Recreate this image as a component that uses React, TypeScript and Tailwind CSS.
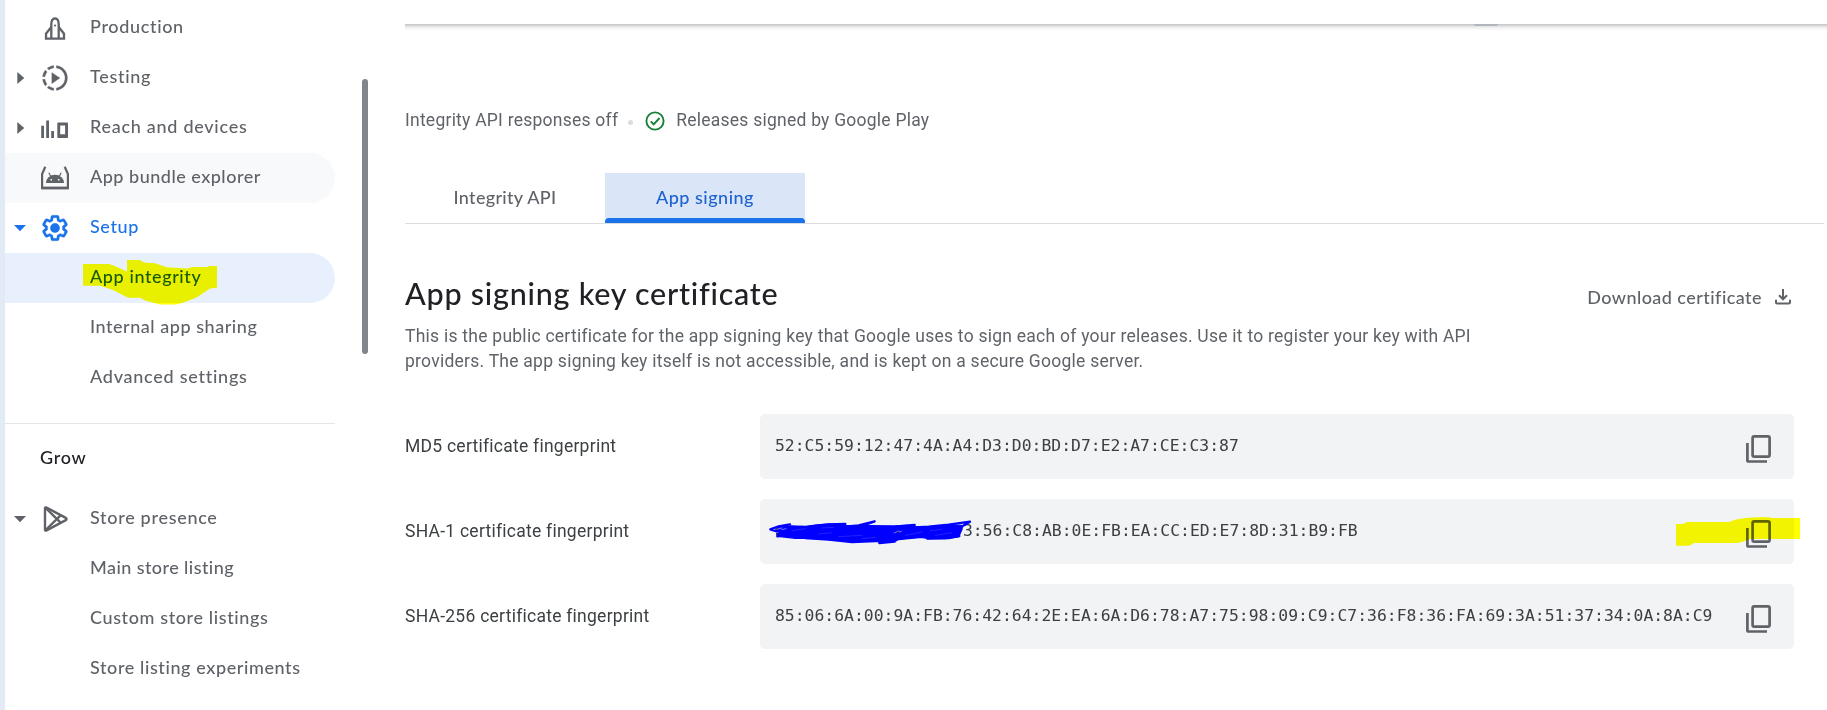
import React from "react";

const RocketIcon = () => (
  <svg width="30" height="30" viewBox="0 0 30 30" fill="none" stroke="#5f6368" strokeWidth="2.3">
    <path d="M11.300 25.500V11c0-3.400 1.500-5.500 3.700-5.700 2.200.200 3.700 2.300 3.700 5.700v14.500" />
    <path d="M11.300 14 6 20.700V25.600H24V20.700L18.700 14" />
    <circle cx="15" cy="12.500" r="1.100" fill="#5f6368" stroke="none" />
  </svg>
);

const TestingIcon = () => (
  <svg width="30" height="30" viewBox="0 0 24 24" fill="#5f6368" stroke="#5f6368" strokeWidth="0.15">
    <path d="M9.400 7.500v9L16 12zM11 4.070V2.050c-2.010.200-3.840 1-5.320 2.210L7.100 5.690c1.110-.860 2.440-1.440 3.900-1.620zM5.690 7.100 4.260 5.680C3.050 7.160 2.250 8.990 2.050 11h2.020c.180-1.460.760-2.790 1.620-3.900zM4.070 13H2.050c.200 2.010 1 3.840 2.210 5.320l1.430-1.430c-.860-1.100-1.440-2.430-1.620-3.890zm1.610 6.740C7.160 20.950 9 21.750 11 21.950v-2.020c-1.460-.180-2.790-.760-3.900-1.620l-1.420 1.430zM22 12c0 5.160-3.920 9.420-8.950 9.950v-2.020C16.970 19.410 20 16.050 20 12s-3.030-7.410-6.950-7.930V2.050C18.080 2.580 22 6.840 22 12z" />
  </svg>
);

const ReachIcon = () => (
  <svg width="30" height="30" viewBox="0 0 30 30" fill="#5f6368">
    <path d="M1.200 12.700H4V25H1.200zM6.200 7.500H9V25H6.200zM11.200 18H14V25H11.200z" />
    <path fillRule="evenodd" d="M18.300 9.500H27c.600 0 1 .400 1 1V24c0 .600-.400 1-1 1h-8.700c-.600 0-1-.400-1-1V10.500c0-.600.400-1 1-1zm1.900 3v8.700h4.900v-8.700z" />
  </svg>
);

const BundleIcon = () => (
  <svg width="30" height="30" viewBox="0 0 30 30" fill="none" stroke="#5f6368" strokeWidth="2.2">
    <path d="M5.300 3.800 2.100 11V25H27.900V11L24.700 3.800" />
    <path d="M1.200 25H28.800" strokeWidth="2.800" />
    <path d="M5.900 20a9.100 8.200 0 0 1 18.200 0z" fill="#5f6368" stroke="none" />
    <path d="M10.700 13.300 8.800 9.800M19.300 13.300 21.200 9.800" strokeWidth="1.200" />
    <path d="M10.500 16.700h1.500M18 16.700h1.500" stroke="#f8f9fb" strokeWidth="1.500" />
  </svg>
);

const GearIcon = () => (
  <svg width="30" height="30" viewBox="0 0 24 24" fill="#1a73e8" stroke="#1a73e8" strokeWidth="0.2">
    <path d="M13.850 22.250h-3.700c-.740 0-1.360-.540-1.450-1.270l-.270-1.890c-.270-.140-.530-.290-.790-.460l-1.800.720c-.700.260-1.470-.030-1.810-.650L2.200 15.530c-.350-.660-.200-1.440.360-1.880l1.530-1.190c-.010-.150-.020-.300-.020-.460 0-.150.010-.310.020-.460l-1.520-1.190c-.590-.450-.740-1.260-.370-1.880l1.850-3.190c.340-.620 1.110-.900 1.790-.630l1.810.730c.260-.170.520-.320.780-.460l.270-1.910c.090-.700.710-1.250 1.440-1.250h3.700c.740 0 1.360.540 1.450 1.270l.270 1.890c.270.140.530.290.790.460l1.800-.720c.710-.260 1.480.030 1.820.650l1.840 3.180c.360.660.200 1.440-.360 1.880l-1.520 1.190c.010.150.020.300.020.460s-.010.310-.020.460l1.520 1.190c.560.450.720 1.230.370 1.860l-1.860 3.220c-.340.620-1.110.900-1.800.630l-1.800-.720c-.260.170-.520.320-.780.460l-.270 1.910c-.100.680-.720 1.220-1.460 1.220zm-3.230-2h2.760l.370-2.550.530-.220c.440-.180.880-.440 1.340-.780l.450-.340 2.380.960 1.380-2.400-2.030-1.580.070-.560c.030-.260.060-.510.060-.780s-.030-.530-.060-.780l-.070-.560 2.030-1.580-1.390-2.400-2.390.960-.450-.350c-.420-.320-.870-.580-1.330-.770l-.520-.220-.370-2.550h-2.760l-.370 2.550-.530.210c-.440.190-.880.440-1.340.790l-.450.330-2.380-.950-1.390 2.390 2.030 1.580-.070.560a7 7 0 0 0-.060.790c0 .260.020.530.060.780l.070.560-2.030 1.580 1.380 2.400 2.390-.960.450.350c.430.330.860.580 1.330.770l.530.220z" />
    <circle cx="12" cy="12" r="3.800" />
  </svg>
);

const PlayStoreIcon = () => (
  <svg width="30" height="30" viewBox="0 0 30 30" fill="none" stroke="#5f6368" strokeWidth="2.400" strokeLinejoin="round">
    <path d="M5 4.300V25.700c0 .900.800 1.200 1.600.700L25.800 16.100c1-.500 1-1.700 0-2.200L6.600 3.600C5.800 3.100 5 3.400 5 4.300z" />
    <path d="M5.600 4 20.600 18.600M5.600 26 20.600 11.400" />
  </svg>
);

const CopyIcon = () => (
  <svg width="30" height="30" viewBox="0 0 30 30" fill="none" stroke="#5f6368" strokeWidth="2.700">
    <rect x="8.600" y="2.300" width="17" height="20.400" rx="1.600" />
    <path d="M3.400 9V26.200c0 .800.500 1.300 1.300 1.300H23" />
  </svg>
);

const DownloadIcon = () => (
  <svg width="18" height="18" viewBox="0 0 18 18" fill="none" stroke="#5f6368" strokeWidth="2">
    <path d="M9 1V11M5 7.300 9 11.300 13 7.300M2 11.800V14.400c0 .700.400 1.100 1.100 1.100H14.900c.700 0 1.100-.400 1.100-1.100V11.800" />
  </svg>
);

const CheckIcon = () => (
  <svg width="20" height="20" viewBox="0 0 20 20" fill="none" stroke="#188038" strokeWidth="1.900">
    <circle cx="10" cy="10" r="8.600" />
    <path d="M5.700 10.400 8.700 13.300 14.500 7" />
  </svg>
);

const Caret = ({ open }: { open?: boolean }) => (
  <svg width="14" height="14" viewBox="0 0 14 14" fill="currentColor">
    {open ? <path d="M1 4H13L7 10.200z" /> : <path d="M4.300 1V13L11.300 7z" />}
  </svg>
);

type Row = {
  label: string;
  tracking: string;
  icon?: React.ReactNode;
  caret?: "open" | "closed";
  bg?: string;
  color?: string;
};

const topRows: Row[] = [
  { label: "Production", tracking: "tracking-[0.66px]", icon: <RocketIcon /> },
  { label: "Testing", tracking: "tracking-[0.7px]", icon: <TestingIcon />, caret: "closed" },
  { label: "Reach and devices", tracking: "tracking-[0.72px]", icon: <ReachIcon />, caret: "closed" },
  { label: "App bundle explorer", tracking: "tracking-[0.5px]", icon: <BundleIcon />, bg: "bg-[#f8f9fb]" },
  { label: "Setup", tracking: "tracking-[0.6px]", icon: <GearIcon />, caret: "open", color: "text-[#1a73e8]" },
  { label: "App integrity", tracking: "tracking-[0.6px]", bg: "bg-[#e8f0fe]", color: "text-[#185abc]" },
  { label: "Internal app sharing", tracking: "tracking-[0.54px]" },
  { label: "Advanced settings", tracking: "tracking-[0.74px]" },
];

const growRows: Row[] = [
  { label: "Store presence", tracking: "tracking-[0.7px]", icon: <PlayStoreIcon />, caret: "open" },
  { label: "Main store listing", tracking: "tracking-[0.43px]" },
  { label: "Custom store listings", tracking: "tracking-[0.62px]" },
  { label: "Store listing experiments", tracking: "tracking-[0.6px]" },
];

function NavRow({ label, tracking, icon, caret, bg = "", color = "text-[#5f6368]" }: Row) {
  return (
    <div className={`flex h-[50px] w-[330px] items-center rounded-r-full ${bg} ${color}`}>
      <span className="flex w-[35px] justify-start pl-2">{caret && <Caret open={caret === "open"} />}</span>
      <span className="flex w-[50px]">{icon}</span>
      <span className={`pb-1 font-['Lato',sans-serif] text-[18px] leading-[25px] font-medium whitespace-nowrap ${tracking}`}>
        {label}
      </span>
    </div>
  );
}

const prints = [
  { label: "MD5 certificate fingerprint", value: "52:C5:59:12:47:4A:A4:D3:D0:BD:D7:E2:A7:CE:C3:87" },
  { label: "SHA-1 certificate fingerprint", value: "3:56:C8:AB:0E:FB:EA:CC:ED:E7:8D:31:B9:FB", masked: true },
  {
    label: "SHA-256 certificate fingerprint",
    value: "85:06:6A:00:9A:FB:76:42:64:2E:EA:6A:D6:78:A7:75:98:09:C9:C7:36:F8:36:FA:69:3A:51:37:34:0A:8A:C9",
  },
];

// Hand-drawn pen strokes hiding the first bytes of the SHA-1 value.
const Scribble = () => (
  <svg className="absolute -top-[7px] left-[2px]" width="220" height="40" viewBox="0 0 660 120" fill="none" stroke="#0000ff" strokeLinecap="round" strokeLinejoin="round">
    <path
      fill="#0000ff"
      strokeWidth="4"
      d="M48 44 90 42 130 44 165 39 205 36 255 41 300 42 345 43 400 42 440 40 462 44 520 45 560 38 598 40 600 52 590 74 550 80 498 80 480 76 440 80 395 84 370 86 320 88 270 88 220 84 175 80 140 79 100 79 48 73 44 64 60 62 40 56z"
    />
    <path
      strokeWidth="7"
      d="M84 37 50 43 25 52 44 58 80 46 140 44 200 37 250 36 240 45 290 40 338 28 300 42 395 44 458 39 430 48 500 44 560 38 624 29 602 42 592 58M46 73 90 66 130 78 200 83 270 90 340 87 404 84 352 93 398 89M496 80 560 78 592 72"
    />
    <path stroke="#f1f3f4" strokeWidth="1.500" d="M44 52 60 48M60 53 72 50M396 63 410 57M412 60 418 58" />
    <path stroke="#6666ff" strokeWidth="1" d="M90 56 130 50M180 48 215 46M230 74 300 70M430 70 480 60M520 70 570 62M300 80 340 76M170 66 210 62M505 56 540 52" />
    <path stroke="#3c4043" strokeWidth="3" d="M44 48V54M44 64V72M403 61 408 60" />
  </svg>
);

export default function App() {
  return (
    <div className="relative flex h-[710px] w-[1827px] overflow-hidden bg-white font-['Roboto',sans-serif]">
      <div className="w-[5px] shrink-0 bg-[#e2eaf5]" />
      <nav className="w-[357px] shrink-0 pt-[3px]">
        {topRows.map((r) => (
          <NavRow key={r.label} {...r} />
        ))}
        <div className="mt-[20px] w-[330px] border-t border-[#e4e5e7]" />
        <div className="mt-[21px] pl-[35px] font-['Lato',sans-serif] text-[18px] leading-[25px] font-medium tracking-[0.7px] text-[#202124]">
          Grow
        </div>
        <div className="mt-[24px]">
          {growRows.map((r) => (
            <NavRow key={r.label} {...r} />
          ))}
        </div>
      </nav>
      <div className="mt-[79px] h-[275px] w-[6px] shrink-0 rounded-full bg-[#80868b]" />

      <main className="w-[1459px] shrink-0 pl-[37px]">
        <div className="h-6" />
        <div className="h-[7px] bg-[linear-gradient(to_bottom,#c6c6c6_0,#cfcfcf_1px,#dcdcdc_2px,#ececec_3px,#f7f7f7_5px,#ffffff_7px)]">
          <div className="ml-[1069px] h-[2px] w-6 rounded-b-full bg-[#b0b6bb]" />
        </div>

        <div className="mt-[77px] flex h-[25px] items-center text-[17.5px] leading-[25px] tracking-[0.24px] text-[#5f6368]">
          <span>Integrity API responses off</span>
          <span className="mt-1 ml-[10px] size-[5px] rounded-full bg-[#dadce0]" />
          <span className="ml-[12px]">
            <CheckIcon />
          </span>
          <span className="ml-[11px]">Releases signed by Google Play</span>
        </div>

        <div className="mt-10 flex h-[51px] w-[1419px] border-b border-[#dadce0] font-['Lato',sans-serif] text-[18px] font-medium tracking-[0.3px]">
          <div className="flex h-[50px] w-[200px] items-center justify-center pb-[2px] text-[#5f6368]">Integrity API</div>
          <div className="flex h-[50px] w-[200px] flex-col bg-[#dbe5f8] text-[#1d62d0]">
            <div className="flex h-[45px] items-center justify-center pt-[3px] tracking-[0.5px]">App signing</div>
            <div className="h-[5px] rounded-t-[4px] bg-[#1a73e8]" />
          </div>
        </div>

        <div className="mt-[49px] flex h-[40px] w-[1387px] items-center justify-between font-['Lato',sans-serif] font-medium">
          <h1 className="text-[30.5px] leading-[40px] tracking-[0.76px] text-[#202124]">App signing key certificate</h1>
          <div className="flex items-center gap-3 pt-2 text-[18px] tracking-[0.45px] text-[#5f6368]">
            Download certificate
            <DownloadIcon />
          </div>
        </div>
        <p className="mt-[11px] text-[17.5px] leading-[25px] tracking-[0.25px] whitespace-nowrap text-[#5f6368]">
          This is the public certificate for the app signing key that Google uses to sign each of your releases. Use it to register your key with API
          <br />
          providers. The app signing key itself is not accessible, and is kept on a secure Google server.
        </p>

        <div className="mt-10 flex flex-col gap-5">
          {prints.map((p) => (
            <div key={p.label} className="flex h-[65px] items-center">
              <div className="w-[355px] text-[17.5px] tracking-[0.25px] text-[#3c4043]">{p.label}</div>
              <div className="flex h-[65px] w-[1034px] items-center justify-between rounded-[5px] bg-[#f1f3f4] pr-[20px] pl-[15px]">
                <span className="relative -ml-[15px] pl-[15px] font-['DejaVu_Sans_Mono',monospace] text-[16.4px] text-[#3c4043]">
                  {p.masked && <Scribble />}
                  <span className={p.masked ? "pl-[188px]" : ""}>{p.value}</span>
                </span>
                <span className="pt-[5px]">
                  <CopyIcon />
                </span>
              </div>
            </div>
          ))}
        </div>
      </main>

      <svg className="absolute top-0 left-0 mix-blend-multiply" width="1827" height="710" fill="#ffff00">
        <path d="M83 264H109L115 266 127 271.500V260H140L144 262.500 155 263.300 167 267.300 187 268.500 193 267H208L209 266H217V287.700L210 288.500 197 297.300 183 302.700 176 304.500H160L145 300.500 140 297.700H128L113 290 100 285.700H83z" />
        <path d="M1676 524H1683L1687 522H1729L1735 519.700 1745 518 1757 517.300H1770L1771 518H1800V539H1750L1742 542 1737 543H1694L1689 545.700H1676z" />
      </svg>
    </div>
  );
}
